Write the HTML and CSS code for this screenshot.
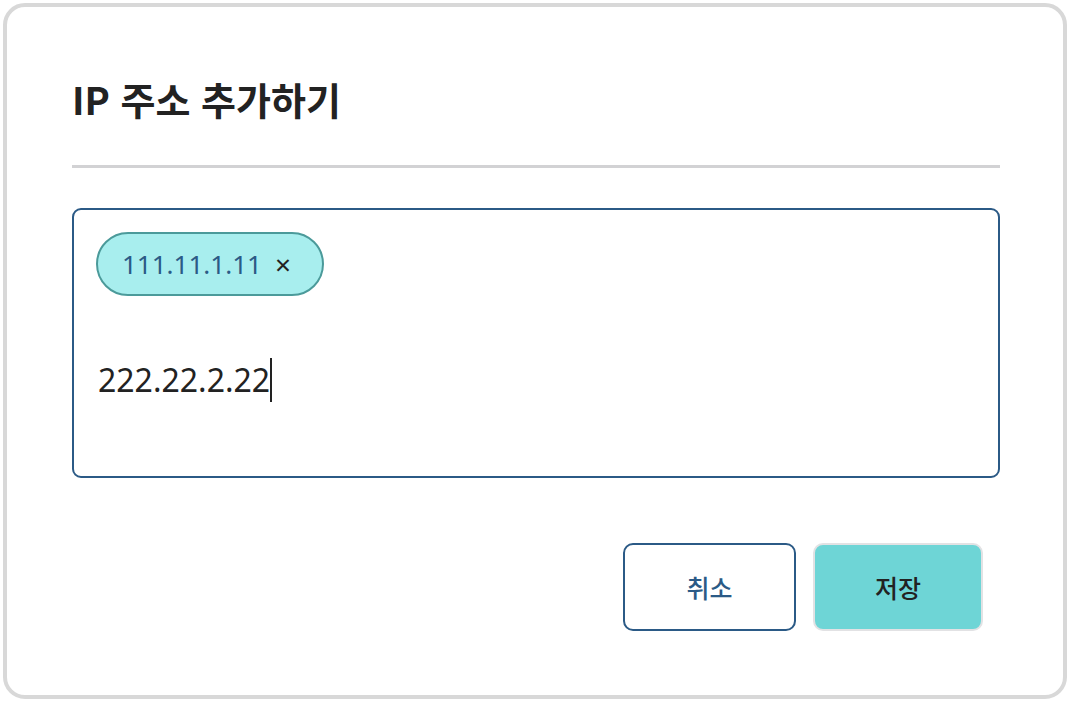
FILE: index.html
```html
<!DOCTYPE html>
<html lang="ko">
<head>
  <meta charset="UTF-8">
  <meta name="viewport" content="width=device-width, initial-scale=1.0">
  <title>IP 주소 추가하기</title>
  <link rel="stylesheet" href="styles.css">
</head>
<body>
  <!-- Dialog -->
  <div class="dialog">
    <h1 class="dialog-title">IP 주소 추가하기</h1>
    <hr class="divider">

    <!-- IP input with tags -->
    <div class="ip-field">
      <div class="tags">
        <span class="tag">111.11.1.11 <span class="tag-remove">×</span></span>
      </div>
      <div class="ip-input">222.22.2.22<span class="caret"></span></div>
    </div>

    <div class="actions">
      <button class="btn btn-cancel">취소</button>
      <button class="btn btn-save">저장</button>
    </div>
  </div>
</body>
</html>
```

FILE: styles.css
```css
/* General Styles */
body {
  font-family: "Noto Sans", "Noto Sans CJK KR", sans-serif;
  margin: 0;
  padding: 3px;
  background-color: #fff;
  color: #222;
}

.dialog {
  box-sizing: border-box;
  height: 696px;
  border: 4px solid #d8d8d8;
  border-radius: 22px;
  padding: 0 63px 0 65px;
  display: flex;
  flex-direction: column;
}

.dialog-title {
  font-family: "Noto Sans CJK KR", sans-serif;
  font-size: 38px;
  font-weight: 700;
  margin: 66px 0 0;
  line-height: 52px;
  color: #222;
}

.divider {
  border: none;
  height: 3px;
  background-color: #d2d2d4;
  margin: 40px 0 0;
}

.ip-field {
  box-sizing: border-box;
  height: 270px;
  margin-top: 40px;
  border: 2px solid #2b5a86;
  border-radius: 9px;
  padding: 22px 22px;
}

.tags {
  display: flex;
  gap: 10px;
}

.tag {
  display: inline-flex;
  align-items: center;
  height: 64px;
  box-sizing: border-box;
  padding: 0 31px 0 24px;
  background-color: #a8eeee;
  border: 2px solid #4b9a9a;
  border-radius: 32px;
  font-size: 26px;
  color: #2b5a86;
}

.tag-remove {
  margin-left: 13px;
  color: #222;
  font-size: 28px;
}

.ip-input {
  margin-top: 62px;
  padding-left: 2px;
  font-size: 32px;
  line-height: 44px;
  color: #222;
}

.caret {
  display: inline-block;
  width: 2px;
  height: 44px;
  background-color: #222;
  vertical-align: top;
}

.actions {
  display: flex;
  justify-content: flex-end;
  gap: 17px;
  margin-top: 65px;
  padding-right: 17px;
}

.btn {
  box-sizing: border-box;
  width: 173px;
  height: 88px;
  border-radius: 10px;
  font-family: "Noto Sans CJK KR", sans-serif;
  font-size: 25px;
  font-weight: 500;
  cursor: pointer;
}

.btn-cancel {
  background-color: #fff;
  border: 2px solid #2b5a86;
  color: #2b5a86;
}

.btn-save {
  width: 170px;
  background-color: #6ed5d6;
  border: 2px solid #e2e2e4;
  color: #222;
}
```
